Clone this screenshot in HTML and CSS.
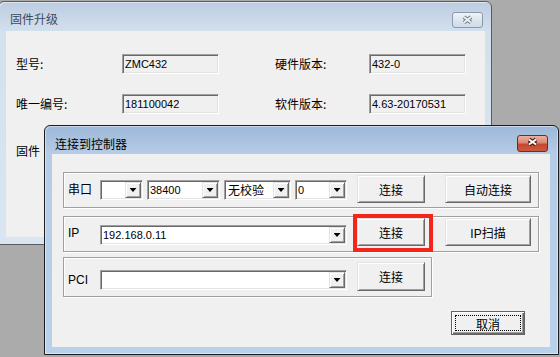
FILE: index.html
```html
<!DOCTYPE html>
<html lang="zh-CN">
<head>
  <meta charset="UTF-8" />
  <title>固件升级 - 连接到控制器</title>
  <link rel="stylesheet" href="styles.css">
</head>
<body>
  <div class="desktop">

    <!-- background window -->
    <section class="win win-back">
      <header class="titlebar">
        <span class="title">固件升级</span>
        <span class="close close-off">
          <svg width="31" height="16" viewBox="0 0 31 16">
            <path d="M12 5 L19 10.5 M19 5 L12 10.5" stroke="#6f7a88" stroke-width="4" fill="none"/>
            <path d="M12 5 L19 10.5 M19 5 L12 10.5" stroke="#eef1f4" stroke-width="2" fill="none"/>
          </svg>
        </span>
      </header>
      <div class="client info">
        <span class="lbl">型号:</span>
        <span class="field">ZMC432</span>
        <span class="lbl">硬件版本:</span>
        <span class="field">432-0</span>
        <span class="lbl">唯一编号:</span>
        <span class="field">181100042</span>
        <span class="lbl">软件版本:</span>
        <span class="field">4.63-20170531</span>
        <span class="lbl fw">固件</span>
      </div>
    </section>

    <!-- connect dialog -->
    <section class="win win-front">
      <header class="titlebar">
        <span class="title">连接到控制器</span>
        <span class="close close-on">
          <svg width="31" height="17" viewBox="0 0 31 17">
            <path d="M12 4.5 L19 9.5 M19 4.5 L12 9.5" stroke="#4a1a12" stroke-width="4" fill="none"/>
            <path d="M12 4.5 L19 9.5 M19 4.5 L12 9.5" stroke="#ffffff" stroke-width="2" fill="none"/>
          </svg>
        </span>
      </header>
      <div class="client conn">

        <div class="group g-serial">
          <span class="lbl">串口</span>
          <div class="combos">
            <span class="combo c-port"><span class="val"></span><span class="dd"></span></span>
            <span class="combo c-baud"><span class="val">38400</span><span class="dd"></span></span>
            <span class="combo c-parity"><span class="val cjk">无校验</span><span class="dd"></span></span>
            <span class="combo c-bit"><span class="val">0</span><span class="dd"></span></span>
          </div>
          <button class="btn">连接</button>
          <button class="btn wide">自动连接</button>
        </div>

        <div class="group g-ip">
          <span class="lbl">IP</span>
          <span class="combo c-long"><span class="val">192.168.0.11</span><span class="dd"></span></span>
          <span class="mark"><button class="btn">连接</button></span>
          <button class="btn wide">IP扫描</button>
        </div>

        <div class="group g-pci">
          <span class="lbl">PCI</span>
          <span class="combo c-long"><span class="val"></span><span class="dd"></span></span>
          <button class="btn">连接</button>
        </div>

        <button class="btn btn-default">取消</button>
      </div>
    </section>

  </div>
</body>
</html>
```

FILE: styles.css
```css
* {
  margin: 0;
  padding: 0;
  box-sizing: border-box;
}

body {
  background: #ababab;
  font-family: 'Liberation Sans', 'Noto Sans CJK SC', sans-serif;
  font-size: 12px;
  color: #000;
}

.desktop {
  position: relative;
  width: 560px;
  height: 357px;
  overflow: hidden;
  background: #ababab;
}

/* windows */
.win {
  position: absolute;
  display: flex;
  flex-direction: column;
  border-radius: 6px 6px 0 0;
}

.win-back {
  left: -2px;
  top: 1px;
  width: 494px;
  height: 244px;
  padding: 0 6px 7px 7px;
  border: 1px solid #5a5c60;
  background: linear-gradient(180deg, #bccde1 0, #d4e0ee 30px, #dae5f2 100%);
  box-shadow: inset 1px 1px rgba(255, 255, 255, 0.5);
}

.win-front {
  left: 44px;
  top: 125px;
  width: 515px;
  height: 230px;
  padding: 0 8px 7px 7px;
  border: 1px solid #1c1c1c;
  background: linear-gradient(180deg, #9db8d9 0, #b6cce6 28px, #b9d1ea 100%);
  box-shadow: inset 1px 1px rgba(255, 255, 255, 0.45), inset -1px -1px rgba(255, 255, 255, 0.45);
}

.titlebar {
  display: flex;
  align-items: flex-start;
  flex-shrink: 0;
}

.win-back .titlebar { height: 29px; }
.win-front .titlebar { height: 28px; }

.title {
  font-family: 'Noto Sans CJK SC', sans-serif;
  font-size: 12px;
  line-height: 16px;
}

.win-back .title {
  margin: 9px 0 0 4px;
  color: #3d4a5a;
}

.win-front .title {
  margin: 10px 0 0 3px;
  color: #000;
}

.close {
  margin-left: auto;
  display: block;
  border-radius: 3px;
}

.close svg { display: block; }

.close-off {
  width: 31px;
  height: 16px;
  margin-top: 10px;
  margin-right: 2px;
  border: 1px solid #8c99a9;
  background: linear-gradient(180deg, #f0f4f9 0%, #dce5f0 50%, #cfdbe9 100%);
}

.close-off svg { margin: -1px; }

.close-on {
  width: 31px;
  height: 17px;
  margin-top: 9px;
  margin-right: 2px;
  border: 1px solid #6b2e24;
  background: linear-gradient(180deg, #eab0a2 0%, #db8873 45%, #c5472e 55%, #c95a42 100%);
}

.close-on svg { margin: -1px; }

.client {
  flex: 1;
  background: #f0f0f0;
}

/* background window content */
.info {
  display: grid;
  grid-template-columns: 106px 153px 94px 97px;
  grid-auto-rows: 20px;
  row-gap: 20px;
  padding: 23px 0 0 10px;
  align-content: start;
}

.info .lbl {
  font-family: 'Noto Sans CJK SC', sans-serif;
  line-height: 20px;
  white-space: nowrap;
}

.info .fw { margin-top: 7px; }

.field {
  width: 97px;
  height: 20px;
  padding: 0 2px;
  border: 1px solid;
  border-color: #a0a0a0 #fff #fff #a0a0a0;
  box-shadow: inset 1px 1px #696969, inset -1px -1px #e3e3e3;
  background: #f0f0f0;
  font-size: 11px;
  line-height: 18px;
}

/* connect dialog content */
.conn {
  display: flex;
  flex-direction: column;
  align-items: flex-start;
  padding: 18px 0 0 11px;
}

.group {
  display: flex;
  align-items: flex-start;
  width: 476px;
  padding-left: 4px;
  border: 1px solid #a0a0a0;
  box-shadow: inset 1px 1px #fff, 1px 1px #fff;
}

.g-serial { height: 36px; padding-top: 2px; }
.g-ip { height: 36px; padding-top: 1px; margin-top: 8px; }
.g-pci { height: 40px; padding-top: 4px; margin-top: 5px; width: 369px; }

.group .lbl {
  width: 32px;
  line-height: 20px;
  font-family: 'Liberation Sans', 'Noto Sans CJK SC', sans-serif;
}

.g-serial .lbl { margin-top: 4px; font-family: 'Noto Sans CJK SC', sans-serif; }
.g-serial .combos { margin-top: 5px; }
.g-ip .lbl { margin-top: 5px; }
.g-ip .combo { margin-top: 7px; }
.g-pci .lbl { margin-top: 8px; }
.g-pci .combo { margin-top: 8px; }

.combos {
  display: flex;
  gap: 4px;
}

.combo {
  display: flex;
  height: 20px;
  padding: 1px;
  border: 1px solid;
  border-color: #a0a0a0 #fff #fff #a0a0a0;
  box-shadow: inset 1px 1px #696969, inset -1px -1px #e3e3e3;
  background: #fff;
}

.c-port { width: 43px; }
.c-baud { width: 73px; }
.c-parity { width: 67px; }
.c-bit { width: 52px; }
.c-long { width: 247px; }

.val {
  flex: 1;
  padding-left: 1px;
  font-size: 11px;
  line-height: 16px;
  white-space: nowrap;
  overflow: hidden;
}

.val.cjk {
  font-family: 'Noto Sans CJK SC', sans-serif;
  font-size: 12px;
  padding-left: 2px;
}

.dd {
  display: flex;
  align-items: center;
  justify-content: center;
  width: 16px;
  height: 16px;
  border: 1px solid;
  border-color: #e3e3e3 #696969 #696969 #e3e3e3;
  box-shadow: inset 1px 1px #fff, inset -1px -1px #a0a0a0;
  background: #f0f0f0;
}

.dd::before {
  content: '';
  width: 7px;
  height: 4px;
  background: #000;
  clip-path: polygon(0 0, 100% 0, 50% 100%);
}

.btn {
  display: flex;
  align-items: center;
  justify-content: center;
  width: 68px;
  height: 28px;
  margin-left: 10px;
  border: 1px solid;
  border-color: #e3e3e3 #696969 #696969 #e3e3e3;
  box-shadow: inset 1px 1px #fff, inset -1px -1px #a0a0a0;
  background: #f0f0f0;
  font-family: 'Liberation Sans', 'Noto Sans CJK SC', sans-serif;
  font-size: 12px;
  color: #000;
}

.btn.wide {
  width: 86px;
  margin-left: 20px;
}

.g-pci .btn { height: 29px; }

.mark {
  position: relative;
  display: block;
}

.mark::after {
  content: '';
  position: absolute;
  top: -4px;
  left: 6px;
  right: -8px;
  bottom: -6px;
  border: 4px solid #f4261b;
}

.btn-default {
  position: relative;
  width: 74px;
  height: 24px;
  margin: 14px 0 0 388px;
  border: 1px solid #646464;
  box-shadow: inset 1px 1px #fff, inset -1px -1px #696969, inset -2px -2px #a0a0a0;
}

.btn-default::after {
  content: '';
  position: absolute;
  top: 3px;
  left: 3px;
  right: 3px;
  bottom: 3px;
  border: 1px dotted #000;
}
```
